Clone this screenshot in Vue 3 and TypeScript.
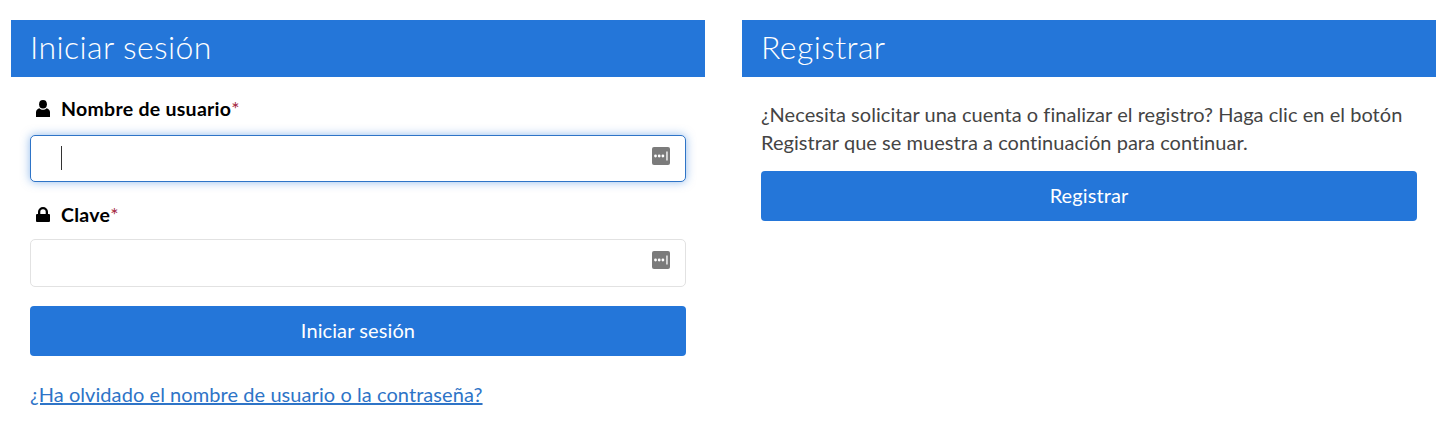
<script setup lang="ts">
const title = 'Iniciar sesión'
</script>

<template>
  <main class="page">
    <section class="panel">
      <h2 class="head">{{ title }}</h2>
      <form class="body login" @submit.prevent>
        <label class="label">
          <svg class="ico" viewBox="0 0 14 17" width="14" height="17"><ellipse cx="7" cy="4.300" rx="3.900" ry="4.300" fill="#000" /><path d="M0 17v-4.800C0 10.200 1.500 8.800 3.500 8.200 4.400 9.200 5.600 9.800 7 9.800s2.600-.6 3.500-1.600c2 .6 3.500 2 3.500 4V17z" fill="#000" /></svg>
          <span>Nombre de usuario<em>*</em></span>
        </label>
        <div class="input focus">
          <i class="caret"></i>
          <svg class="key" viewBox="0 0 18 18" width="18" height="18"><rect width="18" height="18" rx="2" fill="#7b7b7b" /><circle cx="3.500" cy="9" r="1.400" fill="#fff" /><circle cx="7.200" cy="9" r="1.400" fill="#fff" /><circle cx="10.900" cy="9" r="1.400" fill="#fff" /><rect x="14.300" y="4.500" width="1.300" height="9" fill="#fff" /></svg>
        </div>
        <label class="label second">
          <svg class="ico" viewBox="0 0 14 15" width="14" height="15"><path d="M0 8a1 1 0 0 1 1-1h1V4.800a5 4.800 0 0 1 10 0V7h1a1 1 0 0 1 1 1v6a1 1 0 0 1-1 1H1a1 1 0 0 1-1-1zM4.300 7h5.400V4.800a2.700 2.600 0 0 0-5.400 0z" fill="#000" fill-rule="evenodd" /></svg>
          <span>Clave<em>*</em></span>
        </label>
        <div class="input">
          <svg class="key" viewBox="0 0 18 18" width="18" height="18"><rect width="18" height="18" rx="2" fill="#7b7b7b" /><circle cx="3.500" cy="9" r="1.400" fill="#fff" /><circle cx="7.200" cy="9" r="1.400" fill="#fff" /><circle cx="10.900" cy="9" r="1.400" fill="#fff" /><rect x="14.300" y="4.500" width="1.300" height="9" fill="#fff" /></svg>
        </div>
        <button class="btn login-btn" type="submit">Iniciar sesión</button>
        <a class="link" href="#">¿Ha olvidado el nombre de usuario o la contraseña?</a>
      </form>
    </section>
    <section class="panel">
      <h2 class="head">Registrar</h2>
      <div class="body">
        <p class="text">¿Necesita solicitar una cuenta o finalizar el registro? Haga clic en el botón Registrar que se muestra a continuación para continuar.</p>
        <button class="btn" type="button">Registrar</button>
      </div>
    </section>
  </main>
</template>

<style scoped>
.page {
  width: 1455px;
  height: 434px;
  box-sizing: border-box;
  padding: 20px 19px 0 11px;
  display: grid;
  grid-template-columns: 694px 694px;
  column-gap: 37px;
  font-family: Lato, "Liberation Sans", sans-serif;
  background: #fff;
  overflow: hidden;
}
.head {
  margin: 0;
  height: 57px;
  box-sizing: border-box;
  padding: 0 19px 4px;
  display: flex;
  align-items: center;
  background: #2476d9;
  color: #fff;
  font-size: 32px;
  font-weight: 300;
  letter-spacing: 0.4px;
}
.body {
  display: flex;
  flex-direction: column;
  padding: 23px 19px 0;
}
.login { padding-top: 21px; }
.label {
  display: flex;
  align-items: center;
  gap: 11px;
  height: 20px;
  padding-left: 6px;
  font-size: 19.500px;
  font-weight: 700;
  letter-spacing: 0.28px;
  color: #000;
}
.second { margin-top: 22px; }
.label em { color: #a3233c; font-style: normal; font-weight: 400; }
.input {
  margin-top: 17px;
  height: 48px;
  box-sizing: border-box;
  border: 1px solid #e2e2e2;
  border-radius: 5px;
  display: flex;
  align-items: center;
  padding: 0 15px 6px 30px;
  background: #fff;
}
.second + .input { margin-top: 15px; }
.focus {
  height: 47px;
  border-color: #2e74c7;
  box-shadow: 0 0 10px rgba(36, 118, 217, 0.5);
}
.caret {
  width: 1px;
  height: 24px;
  margin-top: 4px;
  background: #333;
}
.key { margin-left: auto; }
.btn {
  height: 50px;
  border: 0;
  border-radius: 4px;
  background: #2476d9;
  color: #fff;
  font: 400 20px Lato, "Liberation Sans", sans-serif;
  letter-spacing: 0.1px;
  padding: 0 0 2px;
  cursor: pointer;
}
.login-btn { margin-top: 19px; }
.link {
  margin-top: 26px;
  color: #2e74c7;
  font-size: 20px;
  letter-spacing: 0.07px;
  line-height: 24px;
}
.text {
  margin: 0 0 15px;
  color: #444;
  font-size: 20px;
  letter-spacing: 0.04px;
  line-height: 28px;
}
</style>
